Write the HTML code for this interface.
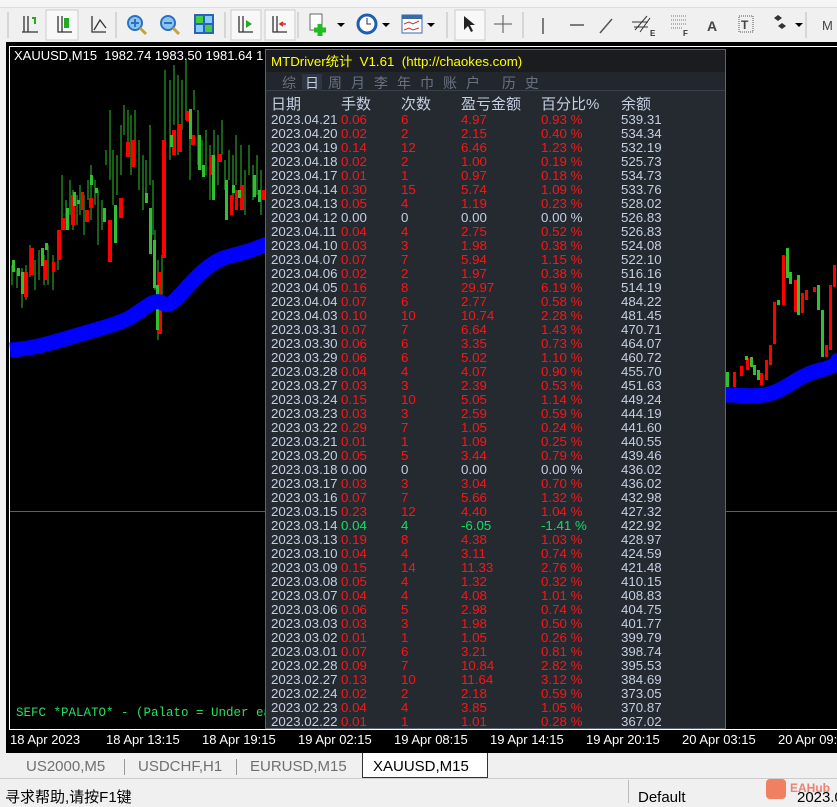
<!DOCTYPE html>
<html><head><meta charset="utf-8"><style>
*{margin:0;padding:0;box-sizing:border-box}
body{width:837px;height:803px;overflow:hidden;background:#f0f0f0;position:relative;font-family:"Liberation Sans","Noto Sans CJK SC",sans-serif}
.abs{position:absolute}
#menu{left:0;top:0;width:837px;height:8px;background:#f5f5f5;border-bottom:1px solid #ddd}
#tb{left:0;top:8px;width:837px;height:34px;background:#f0f0f0}
#chart{left:6px;top:42px;width:831px;height:711px;background:#000}
#inner{left:9px;top:46px;width:828px;height:684px;border-left:1px solid #fff;border-top:1px solid #fff;border-bottom:1px solid #fff}
#panel{left:265px;top:49px;width:461px;height:680px;background:#252a31;border:1px solid #5c6470}
.t{position:absolute;font-size:13.3px;line-height:14px;white-space:nowrap}
.w{color:#c4cfe2}
.tab{position:absolute;top:756px;height:22px;font-size:15px;color:#707070;line-height:22px}
</style></head><body>
<div class="abs" id="menu"></div>
<div class="abs" id="tb">
<svg width="837" height="34" viewBox="0 0 837 34">
<g stroke="#bbb"><line x1="8" y1="4" x2="8" y2="30"/><line x1="116" y1="4" x2="116" y2="30"/><line x1="225" y1="4" x2="225" y2="30"/><line x1="298" y1="4" x2="298" y2="30"/><line x1="447" y1="4" x2="447" y2="30"/><line x1="523" y1="4" x2="523" y2="30"/><line x1="806" y1="4" x2="806" y2="30"/></g>
<rect x="46" y="2" width="32" height="30" fill="#f8f8f8" stroke="#ccc"/>
<rect x="231" y="2" width="30" height="30" fill="#f8f8f8" stroke="#ccc"/>
<rect x="265" y="2" width="30" height="30" fill="#f8f8f8" stroke="#ccc"/>
<rect x="455" y="2" width="30" height="30" fill="#f8f8f8" stroke="#ccc"/>
<g stroke="#333" fill="none" stroke-width="1.3">
<path d="M24 8v16h14M28 8v16M22 24h2"/><path d="M58 8v16h14M62 8v16"/><path d="M92 8v16h14M94 22l6-10 6 8"/>
<path d="M239 8v16h14M243 8v16"/><path d="M273 8v16h14M277 8v16"/>
</g>
<rect x="64" y="10" width="5" height="10" fill="#2a2"/><path d="M32 10h3v6" stroke="#2a2" fill="none" stroke-width="2"/>
<path d="M246 12l6 4-6 4z" fill="#2a2"/><path d="M286 16h-6M283 14l-3 2 3 2" stroke="#d22" fill="none" stroke-width="1.5"/>
<circle cx="135" cy="15" r="7" fill="#8cc4f0" stroke="#2a72c0" stroke-width="2"/><path d="M140 20l6 6" stroke="#c8a040" stroke-width="3"/><path d="M131 15h8M135 11v8" stroke="#2a72c0" stroke-width="2"/>
<circle cx="168" cy="15" r="7" fill="#8cc4f0" stroke="#2a72c0" stroke-width="2"/><path d="M173 20l6 6" stroke="#c8a040" stroke-width="3"/><path d="M164 15h8" stroke="#2a72c0" stroke-width="2"/>
<rect x="194" y="6" width="20" height="20" fill="#2a62b8"/><rect x="196" y="8" width="7" height="7" fill="#4c4"/><rect x="205" y="17" width="7" height="7" fill="#4c4"/><rect x="205" y="8" width="7" height="7" fill="#8cf"/><rect x="196" y="17" width="7" height="7" fill="#8cf"/>
<rect x="310" y="6" width="12" height="16" fill="#fff" stroke="#666"/><path d="M320 16v12M314 22h12" stroke="#2b2" stroke-width="5"/><path d="M337 15l4 4 4-4z" fill="#000"/>
<circle cx="367" cy="16" r="9" fill="#fff" stroke="#1c5fb0" stroke-width="3"/><path d="M367 10v6h4" stroke="#333" fill="none"/><path d="M382 15l4 4 4-4z" fill="#000"/>
<rect x="402" y="7" width="20" height="18" fill="#fff" stroke="#3a6aa8"/><rect x="402" y="7" width="20" height="4" fill="#3a6aa8"/><path d="M404 16l5-2 4 2 6-3M404 22l5-2 4 2 6-2" stroke="#c33" fill="none"/><path d="M427 15l4 4 4-4z" fill="#000"/>
<path d="M464 8v14l4-4 3 6 2-1-3-6h5z" fill="#222"/>
<path d="M503 7v18M494 16h18" stroke="#555"/>
<path d="M543 10v16M570 17h14M600 25l12-14" stroke="#555" stroke-width="1.5"/>
<path d="M635 22l12-14M640 24l10-14M632 14h16M634 19h14" stroke="#333"/><text x="650" y="28" font-size="8" fill="#333" font-weight="bold">E</text>
<path d="M671 8h16M671 12h16M671 16h16M671 20h12" stroke="#777" stroke-dasharray="1 1"/><text x="683" y="28" font-size="8" fill="#333" font-weight="bold">F</text>
<text x="707" y="23" font-size="14" font-weight="bold" fill="#444">A</text>
<rect x="739" y="8" width="14" height="16" fill="none" stroke="#555" stroke-dasharray="1 1"/><text x="741" y="21" font-size="12" font-weight="bold" fill="#444">T</text>
<path d="M774 10l4-3 4 3-4 3zM778 18l4-3 4 3-4 3z" fill="#333"/><path d="M795 15l4 4 4-4z" fill="#000"/>
<text x="822" y="22" font-size="13" fill="#444">M</text>
</svg></div>
<div class="abs" id="chart"></div>
<div class="abs" id="inner"></div>
<svg class="abs" style="left:0;top:0" width="837" height="760">
<line x1="10" y1="511.5" x2="837" y2="511.5" stroke="#d010d0"/>
<g stroke-width="1" stroke="#30c030">
<path d="M12 265v20M17 270v18M22 268v40M26 265v35M30 245v32M35 260v30M39 250v30M44 255v30M48 245v40M53 255v35M58 235v35M62 175v55M66 200v30M70 180v35M73 190v40M77 195v30M80 185v30M84 195v40M88 180v20M91 165v55M95 180v25M98 190v55M102 200v30M106 150v15M110 110v70M113 150v55M117 155v40M121 125v50M124 105v30M128 110v40M131 115v60M135 110v55M139 140v50M143 155v55M146 160v40M150 125v60M153 180v55M155 230v60M158 260v80M162 255v50M165 70v80M170 80v80M174 65v60M178 75v80M182 80v50M186 60v60M190 110v70M194 90v20M198 110v55M202 140v30M206 130v45M210 145v55M214 130v60M218 135v50M222 120v35M225 160v30M229 150v30M233 155v45M236 135v50M241 145v40M245 170v45M249 145v30M253 165v35M257 155v40M261 170v45"/>
</g>
<g fill="#ff0000">
<rect x="24" y="272" width="4" height="25"/><rect x="30" y="248" width="4" height="27"/><rect x="44" y="260" width="3" height="20"/><rect x="52" y="262" width="3" height="10"/><rect x="57" y="230" width="4" height="30"/><rect x="61" y="218" width="4" height="12"/><rect x="71" y="195" width="4" height="30"/><rect x="81" y="192" width="3" height="18"/><rect x="85" y="210" width="4" height="12"/><rect x="89" y="198" width="4" height="10"/><rect x="108" y="220" width="4" height="42"/><rect x="119" y="198" width="4" height="20"/><rect x="126" y="142" width="4" height="15"/><rect x="131" y="140" width="4" height="27"/><rect x="158" y="272" width="4" height="62"/><rect x="162" y="140" width="4" height="118"/><rect x="172" y="130" width="4" height="25"/><rect x="178" y="124" width="4" height="28"/><rect x="186" y="111" width="4" height="10"/><rect x="191" y="135" width="4" height="10"/><rect x="210" y="155" width="4" height="20"/><rect x="218" y="154" width="4" height="8"/><rect x="230" y="195" width="3" height="20"/><rect x="235" y="190" width="3" height="20"/><rect x="240" y="185" width="4" height="25"/><rect x="262" y="190" width="3" height="10"/>
<rect x="733" y="372" width="3" height="15"/><rect x="740" y="366" width="3" height="10"/><rect x="746" y="358" width="3" height="12"/><rect x="760" y="373" width="3" height="12"/><rect x="765" y="360" width="3" height="20"/><rect x="769" y="345" width="3" height="20"/><rect x="773" y="302" width="3" height="42"/><rect x="782" y="255" width="3" height="50"/><rect x="794" y="280" width="3" height="32"/><rect x="801" y="293" width="3" height="20"/><rect x="805" y="290" width="3" height="10"/><rect x="813" y="287" width="3" height="5"/><rect x="825" y="345" width="3" height="12"/><rect x="829" y="285" width="3" height="65"/><rect x="833" y="265" width="3" height="22"/>
</g>
<g fill="#30c030">
<rect x="12" y="260" width="3" height="12"/><rect x="17" y="268" width="3" height="8"/><rect x="21" y="272" width="3" height="22"/><rect x="41" y="248" width="3" height="18"/><rect x="45" y="243" width="3" height="7"/><rect x="66" y="208" width="3" height="22"/><rect x="73" y="192" width="3" height="14"/><rect x="77" y="200" width="3" height="4"/><rect x="90" y="175" width="3" height="10"/><rect x="95" y="188" width="3" height="5"/><rect x="103" y="208" width="3" height="14"/><rect x="114" y="205" width="3" height="38"/><rect x="145" y="193" width="3" height="10"/><rect x="149" y="208" width="3" height="46"/><rect x="153" y="240" width="3" height="48"/><rect x="156" y="285" width="3" height="45"/><rect x="170" y="135" width="3" height="12"/><rect x="189" y="109" width="3" height="30"/><rect x="198" y="135" width="3" height="35"/><rect x="202" y="165" width="3" height="12"/><rect x="212" y="155" width="3" height="45"/><rect x="225" y="180" width="3" height="40"/><rect x="232" y="185" width="3" height="8"/><rect x="238" y="190" width="3" height="8"/><rect x="253" y="175" width="3" height="22"/><rect x="258" y="190" width="3" height="12"/>
<rect x="726" y="372" width="3" height="15"/><rect x="745" y="356" width="3" height="4"/><rect x="750" y="357" width="3" height="10"/><rect x="753" y="365" width="3" height="10"/><rect x="757" y="370" width="3" height="10"/><rect x="777" y="300" width="3" height="5"/><rect x="786" y="248" width="3" height="30"/><rect x="789" y="272" width="3" height="12"/><rect x="797" y="275" width="3" height="40"/><rect x="817" y="285" width="3" height="25"/><rect x="821" y="310" width="3" height="47"/>
</g>
<path d="M10 350C40 348 60 340 95 330S130 318 150 304C165 296 162 312 175 300S205 262 230 256S255 248 268 244" stroke="#0000ff" stroke-width="15" fill="none"/>
<path d="M725 395C750 395 760 398 775 392S800 375 820 370S835 362 840 358" stroke="#0000ff" stroke-width="15" fill="none"/>
</svg>
<div class="t" style="left:14px;top:49px;color:#fff;font-size:13px">XAUUSD,M15&nbsp; 1982.74 1983.50 1981.64 1</div>
<div class="t" style="left:16px;top:706px;color:#20e060;font-family:'Liberation Mono',monospace;font-size:12.5px">SEFC *PALATO* - (Palato = Under eart</div>
<div class="abs" style="left:10px;top:730px;width:827px;height:22px;background:#000"></div>
<div class="t" style="top:733px;left:10px;color:#fff;font-size:13px">18 Apr 2023</div>
<div class="t" style="top:733px;left:106px;color:#fff;font-size:13px">18 Apr 13:15</div>
<div class="t" style="top:733px;left:202px;color:#fff;font-size:13px">18 Apr 19:15</div>
<div class="t" style="top:733px;left:298px;color:#fff;font-size:13px">19 Apr 02:15</div>
<div class="t" style="top:733px;left:394px;color:#fff;font-size:13px">19 Apr 08:15</div>
<div class="t" style="top:733px;left:490px;color:#fff;font-size:13px">19 Apr 14:15</div>
<div class="t" style="top:733px;left:586px;color:#fff;font-size:13px">19 Apr 20:15</div>
<div class="t" style="top:733px;left:682px;color:#fff;font-size:13px">20 Apr 03:15</div>
<div class="t" style="top:733px;left:778px;color:#fff;font-size:13px">20 Apr 09:</div>
<div class="abs" style="left:0;top:753px;width:837px;height:26px;background:#f0f0f0;border-bottom:1px solid #ccc"></div>
<div class="tab" style="left:26px">US2000,M5</div>
<div class="abs" style="left:124px;top:759px;width:1px;height:16px;background:#999"></div>
<div class="tab" style="left:138px">USDCHF,H1</div>
<div class="abs" style="left:236px;top:759px;width:1px;height:16px;background:#999"></div>
<div class="tab" style="left:250px">EURUSD,M15</div>
<div class="abs" style="left:362px;top:753px;width:126px;height:25px;background:#fff;border:1px solid #333;border-top:none"></div>
<div class="tab" style="left:373px;color:#000">XAUUSD,M15</div>
<div class="t" style="left:5px;top:789px;font-size:15px;line-height:18px;color:#000">寻求帮助,请按F1键</div>
<div class="abs" style="left:628px;top:780px;width:1px;height:23px;background:#bbb"></div>
<div class="t" style="left:638px;top:789px;font-size:15px;line-height:18px;color:#000">Default</div>
<div class="abs" style="left:766px;top:779px;width:20px;height:20px;background:#f08060;border-radius:4px"></div>
<div class="t" style="left:790px;top:781px;font-size:12px;color:#f08070;font-weight:bold">EAHub</div>
<div class="t" style="left:797px;top:789px;font-size:15px;line-height:18px;color:#000">2023.0</div>
<div class="abs" id="panel">
<div class="abs" style="left:0;top:0;width:459px;height:22px;background:#1a1c1f"></div>
<div class="t" style="left:5px;top:4px;color:#ffff00;font-size:13.3px;line-height:16px">MTDriver统计&nbsp; V1.61&nbsp; (http://chaokes.com)</div>
<div class="abs" style="left:0;top:22px;width:459px;height:19px;background:#22272e;border-bottom:1px solid #3a4048"></div>
<div class="abs" style="left:36px;top:24px;width:20px;height:17px;background:#2e3642"></div>
<div class="t" style="left:16px;top:25px;color:#6a7280;font-size:14px;line-height:16px;letter-spacing:9px">综<span style="color:#c4cfe2">日</span>周月李年巾账户&nbsp;历史</div>
<div class="t w" style="left:5px;top:46px;font-size:15px;line-height:17px">日期</div>
<div class="t w" style="left:75px;top:46px;font-size:15px;line-height:17px">手数</div>
<div class="t w" style="left:135px;top:46px;font-size:15px;line-height:17px">次数</div>
<div class="t w" style="left:195px;top:46px;font-size:15px;line-height:17px">盈亏金额</div>
<div class="t w" style="left:275px;top:46px;font-size:15px;line-height:17px">百分比%</div>
<div class="t w" style="left:355px;top:46px;font-size:15px;line-height:17px">余额</div>
<div style="position:absolute;left:5px;top:63px">
<style>.row{height:14px;position:relative}.row span{position:absolute;top:0;font-size:13.3px;line-height:14px;white-space:nowrap}.c0{left:0;color:#c4cfe2}.c1{left:70px}.c2{left:130px}.c3{left:190px}.c4{left:270px}.c5{left:350px;color:#c4cfe2}.R span.c1,.R span.c2,.R span.c3,.R span.c4{color:#ff1414}.G span.c1,.G span.c2,.G span.c3,.G span.c4{color:#10e060}.W span{color:#c4cfe2}</style>
<div class="row R"><span class="c0">2023.04.21</span><span class="c1">0.06</span><span class="c2">6</span><span class="c3">4.97</span><span class="c4">0.93 %</span><span class="c5">539.31</span></div>
<div class="row R"><span class="c0">2023.04.20</span><span class="c1">0.02</span><span class="c2">2</span><span class="c3">2.15</span><span class="c4">0.40 %</span><span class="c5">534.34</span></div>
<div class="row R"><span class="c0">2023.04.19</span><span class="c1">0.14</span><span class="c2">12</span><span class="c3">6.46</span><span class="c4">1.23 %</span><span class="c5">532.19</span></div>
<div class="row R"><span class="c0">2023.04.18</span><span class="c1">0.02</span><span class="c2">2</span><span class="c3">1.00</span><span class="c4">0.19 %</span><span class="c5">525.73</span></div>
<div class="row R"><span class="c0">2023.04.17</span><span class="c1">0.01</span><span class="c2">1</span><span class="c3">0.97</span><span class="c4">0.18 %</span><span class="c5">534.73</span></div>
<div class="row R"><span class="c0">2023.04.14</span><span class="c1">0.30</span><span class="c2">15</span><span class="c3">5.74</span><span class="c4">1.09 %</span><span class="c5">533.76</span></div>
<div class="row R"><span class="c0">2023.04.13</span><span class="c1">0.05</span><span class="c2">4</span><span class="c3">1.19</span><span class="c4">0.23 %</span><span class="c5">528.02</span></div>
<div class="row W"><span class="c0">2023.04.12</span><span class="c1">0.00</span><span class="c2">0</span><span class="c3">0.00</span><span class="c4">0.00 %</span><span class="c5">526.83</span></div>
<div class="row R"><span class="c0">2023.04.11</span><span class="c1">0.04</span><span class="c2">4</span><span class="c3">2.75</span><span class="c4">0.52 %</span><span class="c5">526.83</span></div>
<div class="row R"><span class="c0">2023.04.10</span><span class="c1">0.03</span><span class="c2">3</span><span class="c3">1.98</span><span class="c4">0.38 %</span><span class="c5">524.08</span></div>
<div class="row R"><span class="c0">2023.04.07</span><span class="c1">0.07</span><span class="c2">7</span><span class="c3">5.94</span><span class="c4">1.15 %</span><span class="c5">522.10</span></div>
<div class="row R"><span class="c0">2023.04.06</span><span class="c1">0.02</span><span class="c2">2</span><span class="c3">1.97</span><span class="c4">0.38 %</span><span class="c5">516.16</span></div>
<div class="row R"><span class="c0">2023.04.05</span><span class="c1">0.16</span><span class="c2">8</span><span class="c3">29.97</span><span class="c4">6.19 %</span><span class="c5">514.19</span></div>
<div class="row R"><span class="c0">2023.04.04</span><span class="c1">0.07</span><span class="c2">6</span><span class="c3">2.77</span><span class="c4">0.58 %</span><span class="c5">484.22</span></div>
<div class="row R"><span class="c0">2023.04.03</span><span class="c1">0.10</span><span class="c2">10</span><span class="c3">10.74</span><span class="c4">2.28 %</span><span class="c5">481.45</span></div>
<div class="row R"><span class="c0">2023.03.31</span><span class="c1">0.07</span><span class="c2">7</span><span class="c3">6.64</span><span class="c4">1.43 %</span><span class="c5">470.71</span></div>
<div class="row R"><span class="c0">2023.03.30</span><span class="c1">0.06</span><span class="c2">6</span><span class="c3">3.35</span><span class="c4">0.73 %</span><span class="c5">464.07</span></div>
<div class="row R"><span class="c0">2023.03.29</span><span class="c1">0.06</span><span class="c2">6</span><span class="c3">5.02</span><span class="c4">1.10 %</span><span class="c5">460.72</span></div>
<div class="row R"><span class="c0">2023.03.28</span><span class="c1">0.04</span><span class="c2">4</span><span class="c3">4.07</span><span class="c4">0.90 %</span><span class="c5">455.70</span></div>
<div class="row R"><span class="c0">2023.03.27</span><span class="c1">0.03</span><span class="c2">3</span><span class="c3">2.39</span><span class="c4">0.53 %</span><span class="c5">451.63</span></div>
<div class="row R"><span class="c0">2023.03.24</span><span class="c1">0.15</span><span class="c2">10</span><span class="c3">5.05</span><span class="c4">1.14 %</span><span class="c5">449.24</span></div>
<div class="row R"><span class="c0">2023.03.23</span><span class="c1">0.03</span><span class="c2">3</span><span class="c3">2.59</span><span class="c4">0.59 %</span><span class="c5">444.19</span></div>
<div class="row R"><span class="c0">2023.03.22</span><span class="c1">0.29</span><span class="c2">7</span><span class="c3">1.05</span><span class="c4">0.24 %</span><span class="c5">441.60</span></div>
<div class="row R"><span class="c0">2023.03.21</span><span class="c1">0.01</span><span class="c2">1</span><span class="c3">1.09</span><span class="c4">0.25 %</span><span class="c5">440.55</span></div>
<div class="row R"><span class="c0">2023.03.20</span><span class="c1">0.05</span><span class="c2">5</span><span class="c3">3.44</span><span class="c4">0.79 %</span><span class="c5">439.46</span></div>
<div class="row W"><span class="c0">2023.03.18</span><span class="c1">0.00</span><span class="c2">0</span><span class="c3">0.00</span><span class="c4">0.00 %</span><span class="c5">436.02</span></div>
<div class="row R"><span class="c0">2023.03.17</span><span class="c1">0.03</span><span class="c2">3</span><span class="c3">3.04</span><span class="c4">0.70 %</span><span class="c5">436.02</span></div>
<div class="row R"><span class="c0">2023.03.16</span><span class="c1">0.07</span><span class="c2">7</span><span class="c3">5.66</span><span class="c4">1.32 %</span><span class="c5">432.98</span></div>
<div class="row R"><span class="c0">2023.03.15</span><span class="c1">0.23</span><span class="c2">12</span><span class="c3">4.40</span><span class="c4">1.04 %</span><span class="c5">427.32</span></div>
<div class="row G"><span class="c0">2023.03.14</span><span class="c1">0.04</span><span class="c2">4</span><span class="c3">-6.05</span><span class="c4">-1.41 %</span><span class="c5">422.92</span></div>
<div class="row R"><span class="c0">2023.03.13</span><span class="c1">0.19</span><span class="c2">8</span><span class="c3">4.38</span><span class="c4">1.03 %</span><span class="c5">428.97</span></div>
<div class="row R"><span class="c0">2023.03.10</span><span class="c1">0.04</span><span class="c2">4</span><span class="c3">3.11</span><span class="c4">0.74 %</span><span class="c5">424.59</span></div>
<div class="row R"><span class="c0">2023.03.09</span><span class="c1">0.15</span><span class="c2">14</span><span class="c3">11.33</span><span class="c4">2.76 %</span><span class="c5">421.48</span></div>
<div class="row R"><span class="c0">2023.03.08</span><span class="c1">0.05</span><span class="c2">4</span><span class="c3">1.32</span><span class="c4">0.32 %</span><span class="c5">410.15</span></div>
<div class="row R"><span class="c0">2023.03.07</span><span class="c1">0.04</span><span class="c2">4</span><span class="c3">4.08</span><span class="c4">1.01 %</span><span class="c5">408.83</span></div>
<div class="row R"><span class="c0">2023.03.06</span><span class="c1">0.06</span><span class="c2">5</span><span class="c3">2.98</span><span class="c4">0.74 %</span><span class="c5">404.75</span></div>
<div class="row R"><span class="c0">2023.03.03</span><span class="c1">0.03</span><span class="c2">3</span><span class="c3">1.98</span><span class="c4">0.50 %</span><span class="c5">401.77</span></div>
<div class="row R"><span class="c0">2023.03.02</span><span class="c1">0.01</span><span class="c2">1</span><span class="c3">1.05</span><span class="c4">0.26 %</span><span class="c5">399.79</span></div>
<div class="row R"><span class="c0">2023.03.01</span><span class="c1">0.07</span><span class="c2">6</span><span class="c3">3.21</span><span class="c4">0.81 %</span><span class="c5">398.74</span></div>
<div class="row R"><span class="c0">2023.02.28</span><span class="c1">0.09</span><span class="c2">7</span><span class="c3">10.84</span><span class="c4">2.82 %</span><span class="c5">395.53</span></div>
<div class="row R"><span class="c0">2023.02.27</span><span class="c1">0.13</span><span class="c2">10</span><span class="c3">11.64</span><span class="c4">3.12 %</span><span class="c5">384.69</span></div>
<div class="row R"><span class="c0">2023.02.24</span><span class="c1">0.02</span><span class="c2">2</span><span class="c3">2.18</span><span class="c4">0.59 %</span><span class="c5">373.05</span></div>
<div class="row R"><span class="c0">2023.02.23</span><span class="c1">0.04</span><span class="c2">4</span><span class="c3">3.85</span><span class="c4">1.05 %</span><span class="c5">370.87</span></div>
<div class="row R"><span class="c0">2023.02.22</span><span class="c1">0.01</span><span class="c2">1</span><span class="c3">1.01</span><span class="c4">0.28 %</span><span class="c5">367.02</span></div>
</div>
</div>
</body></html>
